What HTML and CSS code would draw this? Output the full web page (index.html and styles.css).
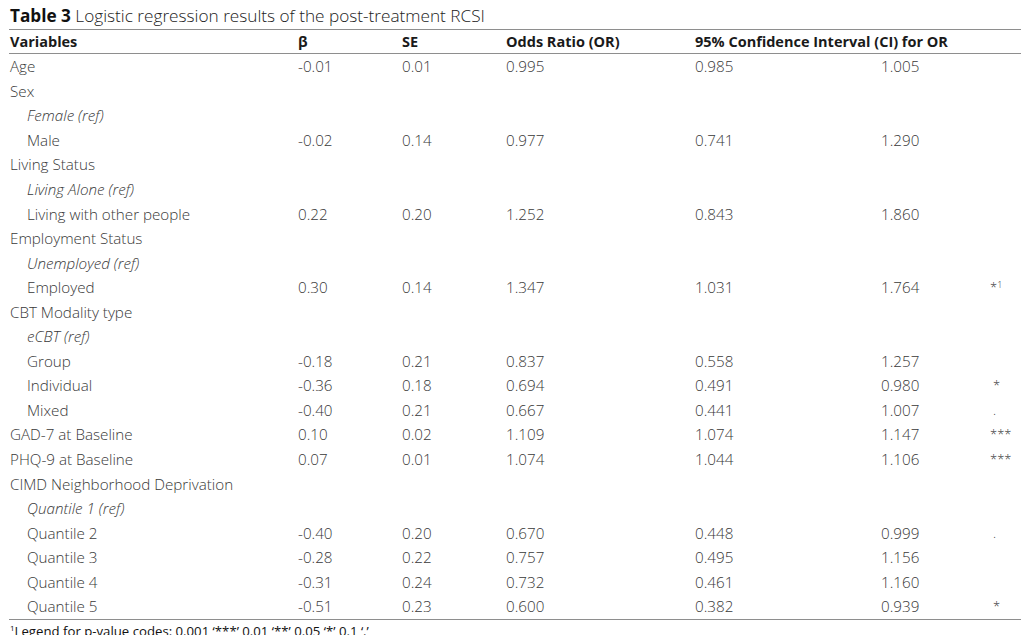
FILE: index.html
```html
<!DOCTYPE html>
<html lang="en">
<head>
<meta charset="utf-8">
<title>Table 3</title>
<link rel="stylesheet" href="styles.css">
</head>
<body>
<div class="page">
  <div class="caption"><span class="cap-label">Table 3</span> Logistic regression results of the post-treatment RCSI</div>
  <table class="tbl">
    <colgroup>
      <col class="c-var"><col class="c-b"><col class="c-se"><col class="c-or"><col class="c-lo"><col class="c-hi"><col class="c-sig">
    </colgroup>
    <thead>
      <tr><th>Variables</th><th>β</th><th>SE</th><th>Odds Ratio (OR)</th><th colspan="3">95% Confidence Interval (CI) for OR</th></tr>
    </thead>
    <tbody>
      <tr><td>Age</td><td>-0.01</td><td>0.01</td><td>0.995</td><td>0.985</td><td>1.005</td><td></td></tr>
      <tr><td>Sex</td><td></td><td></td><td></td><td></td><td></td><td></td></tr>
      <tr><td class="ref">Female (ref)</td><td></td><td></td><td></td><td></td><td></td><td></td></tr>
      <tr><td class="sub">Male</td><td>-0.02</td><td>0.14</td><td>0.977</td><td>0.741</td><td>1.290</td><td></td></tr>
      <tr><td>Living Status</td><td></td><td></td><td></td><td></td><td></td><td></td></tr>
      <tr><td class="ref">Living Alone (ref)</td><td></td><td></td><td></td><td></td><td></td><td></td></tr>
      <tr><td class="sub">Living with other people</td><td>0.22</td><td>0.20</td><td>1.252</td><td>0.843</td><td>1.860</td><td></td></tr>
      <tr><td>Employment Status</td><td></td><td></td><td></td><td></td><td></td><td></td></tr>
      <tr><td class="ref">Unemployed (ref)</td><td></td><td></td><td></td><td></td><td></td><td></td></tr>
      <tr><td class="sub">Employed</td><td>0.30</td><td>0.14</td><td>1.347</td><td>1.031</td><td>1.764</td><td class="sig">*<sup>1</sup></td></tr>
      <tr><td>CBT Modality type</td><td></td><td></td><td></td><td></td><td></td><td></td></tr>
      <tr><td class="ref">eCBT (ref)</td><td></td><td></td><td></td><td></td><td></td><td></td></tr>
      <tr><td class="sub">Group</td><td>-0.18</td><td>0.21</td><td>0.837</td><td>0.558</td><td>1.257</td><td></td></tr>
      <tr><td class="sub">Individual</td><td>-0.36</td><td>0.18</td><td>0.694</td><td>0.491</td><td>0.980</td><td class="sig star1">*</td></tr>
      <tr><td class="sub">Mixed</td><td>-0.40</td><td>0.21</td><td>0.667</td><td>0.441</td><td>1.007</td><td class="sig star1">.</td></tr>
      <tr><td>GAD-7 at Baseline</td><td>0.10</td><td>0.02</td><td>1.109</td><td>1.074</td><td>1.147</td><td class="sig">***</td></tr>
      <tr><td>PHQ-9 at Baseline</td><td>0.07</td><td>0.01</td><td>1.074</td><td>1.044</td><td>1.106</td><td class="sig">***</td></tr>
      <tr><td>CIMD Neighborhood Deprivation</td><td></td><td></td><td></td><td></td><td></td><td></td></tr>
      <tr><td class="ref">Quantile 1 (ref)</td><td></td><td></td><td></td><td></td><td></td><td></td></tr>
      <tr><td class="sub">Quantile 2</td><td>-0.40</td><td>0.20</td><td>0.670</td><td>0.448</td><td>0.999</td><td class="sig star1">.</td></tr>
      <tr><td class="sub">Quantile 3</td><td>-0.28</td><td>0.22</td><td>0.757</td><td>0.495</td><td>1.156</td><td></td></tr>
      <tr><td class="sub">Quantile 4</td><td>-0.31</td><td>0.24</td><td>0.732</td><td>0.461</td><td>1.160</td><td></td></tr>
      <tr><td class="sub">Quantile 5</td><td>-0.51</td><td>0.23</td><td>0.600</td><td>0.382</td><td>0.939</td><td class="sig star1">*</td></tr>
    </tbody>
  </table>
  <div class="foot"><sup>1</sup>Legend for p-value codes: 0.001 ‘***’ 0.01 ‘**’ 0.05 ‘*’ 0.1 ‘.’</div>
</div>
</body>
</html>
```

FILE: styles.css
```css
html, body {
  margin: 0;
  padding: 0;
  background: #ffffff;
}
body {
  font-family: "Open Sans", "Noto Sans", sans-serif;
  color: #383838;
  overflow: hidden;
}
.page {
  padding: 5px 3px 0 9px;
  width: 1012px;
}
.caption {
  font-size: 17.2px;
  font-weight: 300;
  line-height: 22px;
  color: #222;
  padding-left: 1px;
  margin-bottom: 2px;
}
.cap-label {
  font-weight: 700;
  color: #111;
}
.tbl {
  width: 1012px;
  border-collapse: collapse;
  table-layout: fixed;
  font-size: 15.2px;
  font-weight: 300;
}
.c-var { width: 288px; }
.c-b { width: 104px; }
.c-se { width: 104px; }
.c-or { width: 189px; }
.c-lo { width: 186px; }
.c-hi { width: 110px; }
.c-sig { width: 31px; }
.tbl thead tr {
  border-top: 1px solid #8e8e8e;
  border-bottom: 1px solid #8e8e8e;
}
.tbl th {
  text-align: left;
  font-weight: 700;
  color: #1a1a1a;
  height: 23px;
  padding: 0 0 0 1px;
  white-space: nowrap;
  font-size: 14.5px;
}
.tbl td {
  height: 24.55px;
  padding: 0 0 0 1px;
  white-space: nowrap;
  vertical-align: middle;
  line-height: 18px;
}
.tbl tbody tr:last-child {
  border-bottom: 1px solid #8e8e8e;
}
.tbl td.sub { padding-left: 18px; }
.tbl td.ref { padding-left: 18px; font-style: italic; }
.tbl td.sig { font-size: 13px; padding-left: 0; }
.tbl td.star1 { padding-left: 3px; }
.tbl sup { font-size: 9px; vertical-align: 4px; line-height: 0; }
.foot {
  font-size: 13.2px;
  font-weight: 400;
  color: #111;
  padding-left: 1px;
  line-height: 22px;
}
.foot sup { font-size: 8px; vertical-align: 5px; line-height: 0; }
```
